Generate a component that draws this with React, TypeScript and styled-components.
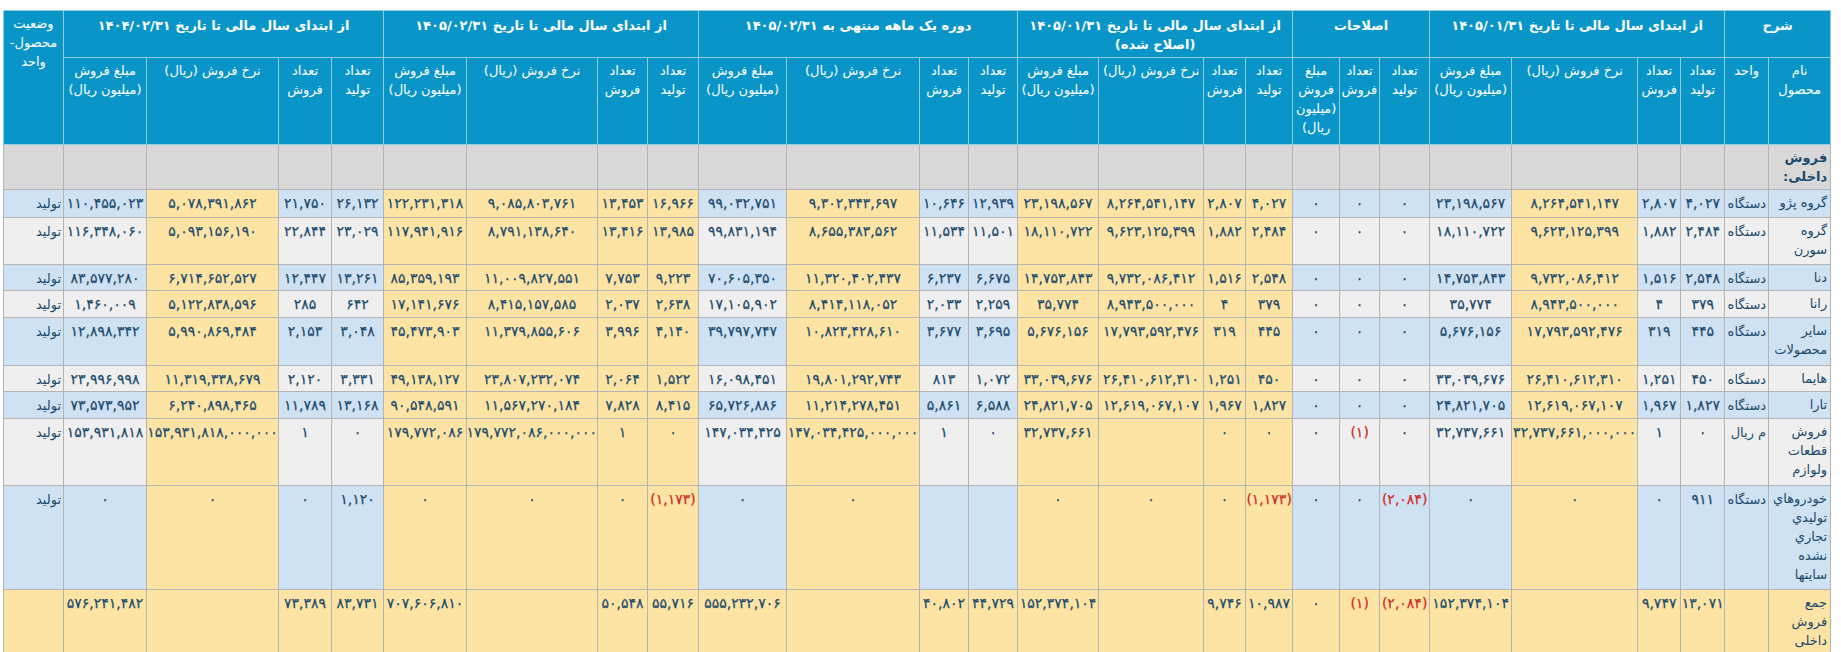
import React from "react";
import styled, { createGlobalStyle } from "styled-components";

const GlobalStyle = createGlobalStyle`
  html, body {
    margin: 0;
    padding: 0;
    background: #ffffff;
  }
  body {
    font-family: "DejaVu Sans", "Noto Sans", sans-serif;
  }
`;

const Page = styled.div`
  padding: 10px 0 0 3px;
`;

const Table = styled.table`
  width: 1827px;
  table-layout: fixed;
  border-collapse: collapse;
  direction: rtl;
  font-family: "DejaVu Sans", "Noto Sans", sans-serif;
  font-size: 13px;
  color: #1b4a6d;
`;

const Row = styled.tr<{ $h: number }>`
  height: ${(p) => p.$h}px;
`;

const Head = styled.th<{ $group?: boolean }>`
  background: #0995c8;
  color: #ffffff;
  border: 1px solid #8fcde8;
  vertical-align: top;
  text-align: center;
  padding: ${(p) => (p.$group ? "5px 4px 3px" : "3px 2px")};
  font-weight: ${(p) => (p.$group ? 700 : 400)};
  font-size: 13px;
  line-height: 19px;
`;

type Tone = "blue" | "grey" | "yellow" | "band";

const tones: Record<Tone, string> = {
  blue: "#cfe2f3",
  grey: "#efefef",
  yellow: "#fde4a4",
  band: "#d8d8d8",
};

const Cell = styled.td<{ $tone: Tone; $side?: boolean; $neg?: boolean }>`
  background: ${(p) => tones[p.$tone]};
  border: 1px solid #b4b4b4;
  vertical-align: top;
  text-align: ${(p) => (p.$side ? "right" : "center")};
  padding: 4px 2px 2px;
  line-height: 19px;
  white-space: nowrap;
  color: ${(p) => (p.$neg ? "#cf2b26" : "inherit")};
`;

const NumCell = styled(Cell)`
  font-size: 14px;
  letter-spacing: ${(p) => (p.$neg ? "0.4px" : "1.5px")};
  padding: 4px 0 2px;
  -webkit-text-stroke: 0.25px currentColor;
`;

const NameCell = styled(Cell)<{ $bold?: boolean }>`
  white-space: normal;
  padding: 3px 3px 2px;
  font-weight: ${(p) => (p.$bold ? 700 : 400)};
`;

// column widths, right to left
const widths = [
  62, 44,
  44, 43, 126, 82,
  50, 40, 47,
  47, 42, 105, 81,
  49, 49, 133, 88,
  51, 50, 131, 83,
  52, 53, 132, 83,
  60,
];

const full = ["تعداد تولید", "تعداد فروش", "نرخ فروش (ریال)", "مبلغ فروش (میلیون ریال)"];

const sections = [
  { title: "از ابتدای سال مالی تا تاریخ 1405/01/31", cols: full, yellow: [false, false, true, false] },
  { title: "اصلاحات", cols: ["تعداد تولید", "تعداد فروش", "مبلغ فروش (میلیون ریال)"], yellow: [false, false, false] },
  { title: "از ابتدای سال مالی تا تاریخ 1405/01/31 (اصلاح شده)", cols: full, yellow: [true, true, true, true] },
  { title: "دوره یک ماهه منتهی به 1405/02/31", cols: full, yellow: [false, false, true, false] },
  { title: "از ابتدای سال مالی تا تاریخ 1405/02/31", cols: full, yellow: [true, true, true, true] },
  { title: "از ابتدای سال مالی تا تاریخ 1404/02/31", cols: full, yellow: [false, false, true, false] },
];

const yellowCols = sections.flatMap((s) => s.yellow);

const fa = (s: string) => s.replace(/\d/g, (d) => "۰۱۲۳۴۵۶۷۸۹"[Number(d)]);

type DataRow = { name: string[]; unit: string; h: number; v: string[]; status: string };

const rows: DataRow[] = [
  {
    name: ["گروه پژو"], unit: "دستگاه", h: 28, status: "تولید",
    v: ["4,027", "2,807", "8,264,541,147", "23,198,567", "0", "0", "0",
      "4,027", "2,807", "8,264,541,147", "23,198,567",
      "12,939", "10,646", "9,302,343,697", "99,032,751",
      "16,966", "13,453", "9,085,803,761", "122,231,318",
      "26,132", "21,750", "5,078,391,862", "110,455,023"],
  },
  {
    name: ["گروه", "سورن"], unit: "دستگاه", h: 47, status: "تولید",
    v: ["2,484", "1,882", "9,623,125,399", "18,110,722", "0", "0", "0",
      "2,484", "1,882", "9,623,125,399", "18,110,722",
      "11,501", "11,534", "8,655,383,562", "99,831,194",
      "13,985", "13,416", "8,791,138,640", "117,941,916",
      "23,029", "22,844", "5,093,156,190", "116,348,060"],
  },
  {
    name: ["دنا"], unit: "دستگاه", h: 26, status: "تولید",
    v: ["2,548", "1,516", "9,732,086,412", "14,753,843", "0", "0", "0",
      "2,548", "1,516", "9,732,086,412", "14,753,843",
      "6,675", "6,237", "11,320,402,437", "70,605,350",
      "9,223", "7,753", "11,009,827,551", "85,359,193",
      "13,261", "12,447", "6,714,652,527", "83,577,280"],
  },
  {
    name: ["رانا"], unit: "دستگاه", h: 27, status: "تولید",
    v: ["379", "4", "8,943,500,000", "35,774", "0", "0", "0",
      "379", "4", "8,943,500,000", "35,774",
      "2,259", "2,033", "8,414,118,052", "17,105,902",
      "2,638", "2,037", "8,415,157,585", "17,141,676",
      "642", "285", "5,122,838,596", "1,460,009"],
  },
  {
    name: ["سایر", "محصولات"], unit: "دستگاه", h: 48, status: "تولید",
    v: ["445", "319", "17,793,592,476", "5,676,156", "0", "0", "0",
      "445", "319", "17,793,592,476", "5,676,156",
      "3,695", "3,677", "10,823,428,610", "39,797,747",
      "4,140", "3,996", "11,379,855,606", "45,473,903",
      "3,048", "2,153", "5,990,869,484", "12,898,342"],
  },
  {
    name: ["هایما"], unit: "دستگاه", h: 26, status: "تولید",
    v: ["450", "1,251", "26,410,612,310", "33,039,676", "0", "0", "0",
      "450", "1,251", "26,410,612,310", "33,039,676",
      "1,072", "813", "19,801,292,743", "16,098,451",
      "1,522", "2,064", "23,807,232,074", "49,138,127",
      "3,331", "2,120", "11,319,338,679", "23,996,998"],
  },
  {
    name: ["تارا"], unit: "دستگاه", h: 27, status: "تولید",
    v: ["1,827", "1,967", "12,619,067,107", "24,821,705", "0", "0", "0",
      "1,827", "1,967", "12,619,067,107", "24,821,705",
      "6,588", "5,861", "11,214,278,451", "65,726,886",
      "8,415", "7,828", "11,567,270,184", "90,548,591",
      "13,168", "11,789", "6,240,898,465", "73,573,952"],
  },
  {
    name: ["فروش", "قطعات", "ولوازم"], unit: "م ریال", h: 67, status: "تولید",
    v: ["0", "1", "32,737,661,000,000", "32,737,661", "0", "(1)", "0",
      "0", "0", "", "32,737,661",
      "0", "1", "147,034,425,000,000", "147,034,425",
      "0", "1", "179,772,086,000,000", "179,772,086",
      "0", "1", "153,931,818,000,000", "153,931,818"],
  },
  {
    name: ["خودروهاي", "توليدي", "تجاري", "نشده", "سايتها"], unit: "دستگاه", h: 104, status: "تولید",
    v: ["911", "0", "0", "0", "(2,084)", "0", "0",
      "(1,173)", "0", "0", "0",
      "", "", "0", "0",
      "(1,173)", "0", "0", "0",
      "1,120", "0", "0", "0"],
  },
];

const total: DataRow = {
  name: ["جمع", "فروش", "داخلی"], unit: "", h: 70, status: "",
  v: ["13,071", "9,747", "", "152,374,104", "(2,084)", "(1)", "0",
    "10,987", "9,746", "", "152,374,104",
    "44,729", "40,802", "", "555,232,706",
    "55,716", "50,548", "", "707,606,810",
    "83,731", "73,389", "", "576,241,482"],
};

const Lines: React.FC<{ lines: string[] }> = ({ lines }) => (
  <>
    {lines.map((l, i) => (
      <React.Fragment key={i}>
        {i > 0 && <br />}
        {l}
      </React.Fragment>
    ))}
  </>
);

const DataLine: React.FC<{ row: DataRow; tone: Tone; all?: boolean }> = ({ row, tone, all }) => (
  <Row $h={row.h}>
    <NameCell $tone={tone} $side>
      <Lines lines={row.name} />
    </NameCell>
    <Cell $tone={tone} $side>{row.unit}</Cell>
    {row.v.map((val, i) => (
      <NumCell key={i} $tone={all || yellowCols[i] ? "yellow" : tone} $neg={val.startsWith("(")}>
        {fa(val)}
      </NumCell>
    ))}
    <Cell $tone={tone} $side>{row.status}</Cell>
  </Row>
);

const App: React.FC = () => {
  const dataCount = yellowCols.length;

  return (
    <Page>
      <GlobalStyle />
      <Table>
        <colgroup>
          {widths.map((w, i) => (
            <col key={i} style={{ width: w }} />
          ))}
        </colgroup>
        <thead>
          <Row $h={45}>
            <Head $group colSpan={2}>شرح</Head>
            {sections.map((s) => (
              <Head $group key={s.title} colSpan={s.cols.length}>
                {fa(s.title)}
              </Head>
            ))}
            <Head rowSpan={2}>وضعیت محصول-واحد</Head>
          </Row>
          <Row $h={87}>
            <Head>نام محصول</Head>
            <Head>واحد</Head>
            {sections.flatMap((s, si) =>
              s.cols.map((c, ci) => <Head key={`${si}-${ci}`}>{c}</Head>)
            )}
          </Row>
        </thead>
        <tbody>
          <Row $h={45}>
            <NameCell $tone="band" $side $bold>
              <Lines lines={["فروش", "داخلی:"]} />
            </NameCell>
            <Cell $tone="band" />
            {Array.from({ length: dataCount }).map((_, i) => (
              <Cell key={i} $tone="band" />
            ))}
            <Cell $tone="band" />
          </Row>
          {rows.map((r, i) => (
            <DataLine key={i} row={r} tone={i % 2 === 0 ? "blue" : "grey"} />
          ))}
          <DataLine row={total} tone="yellow" all />
        </tbody>
      </Table>
    </Page>
  );
};

export default App;
